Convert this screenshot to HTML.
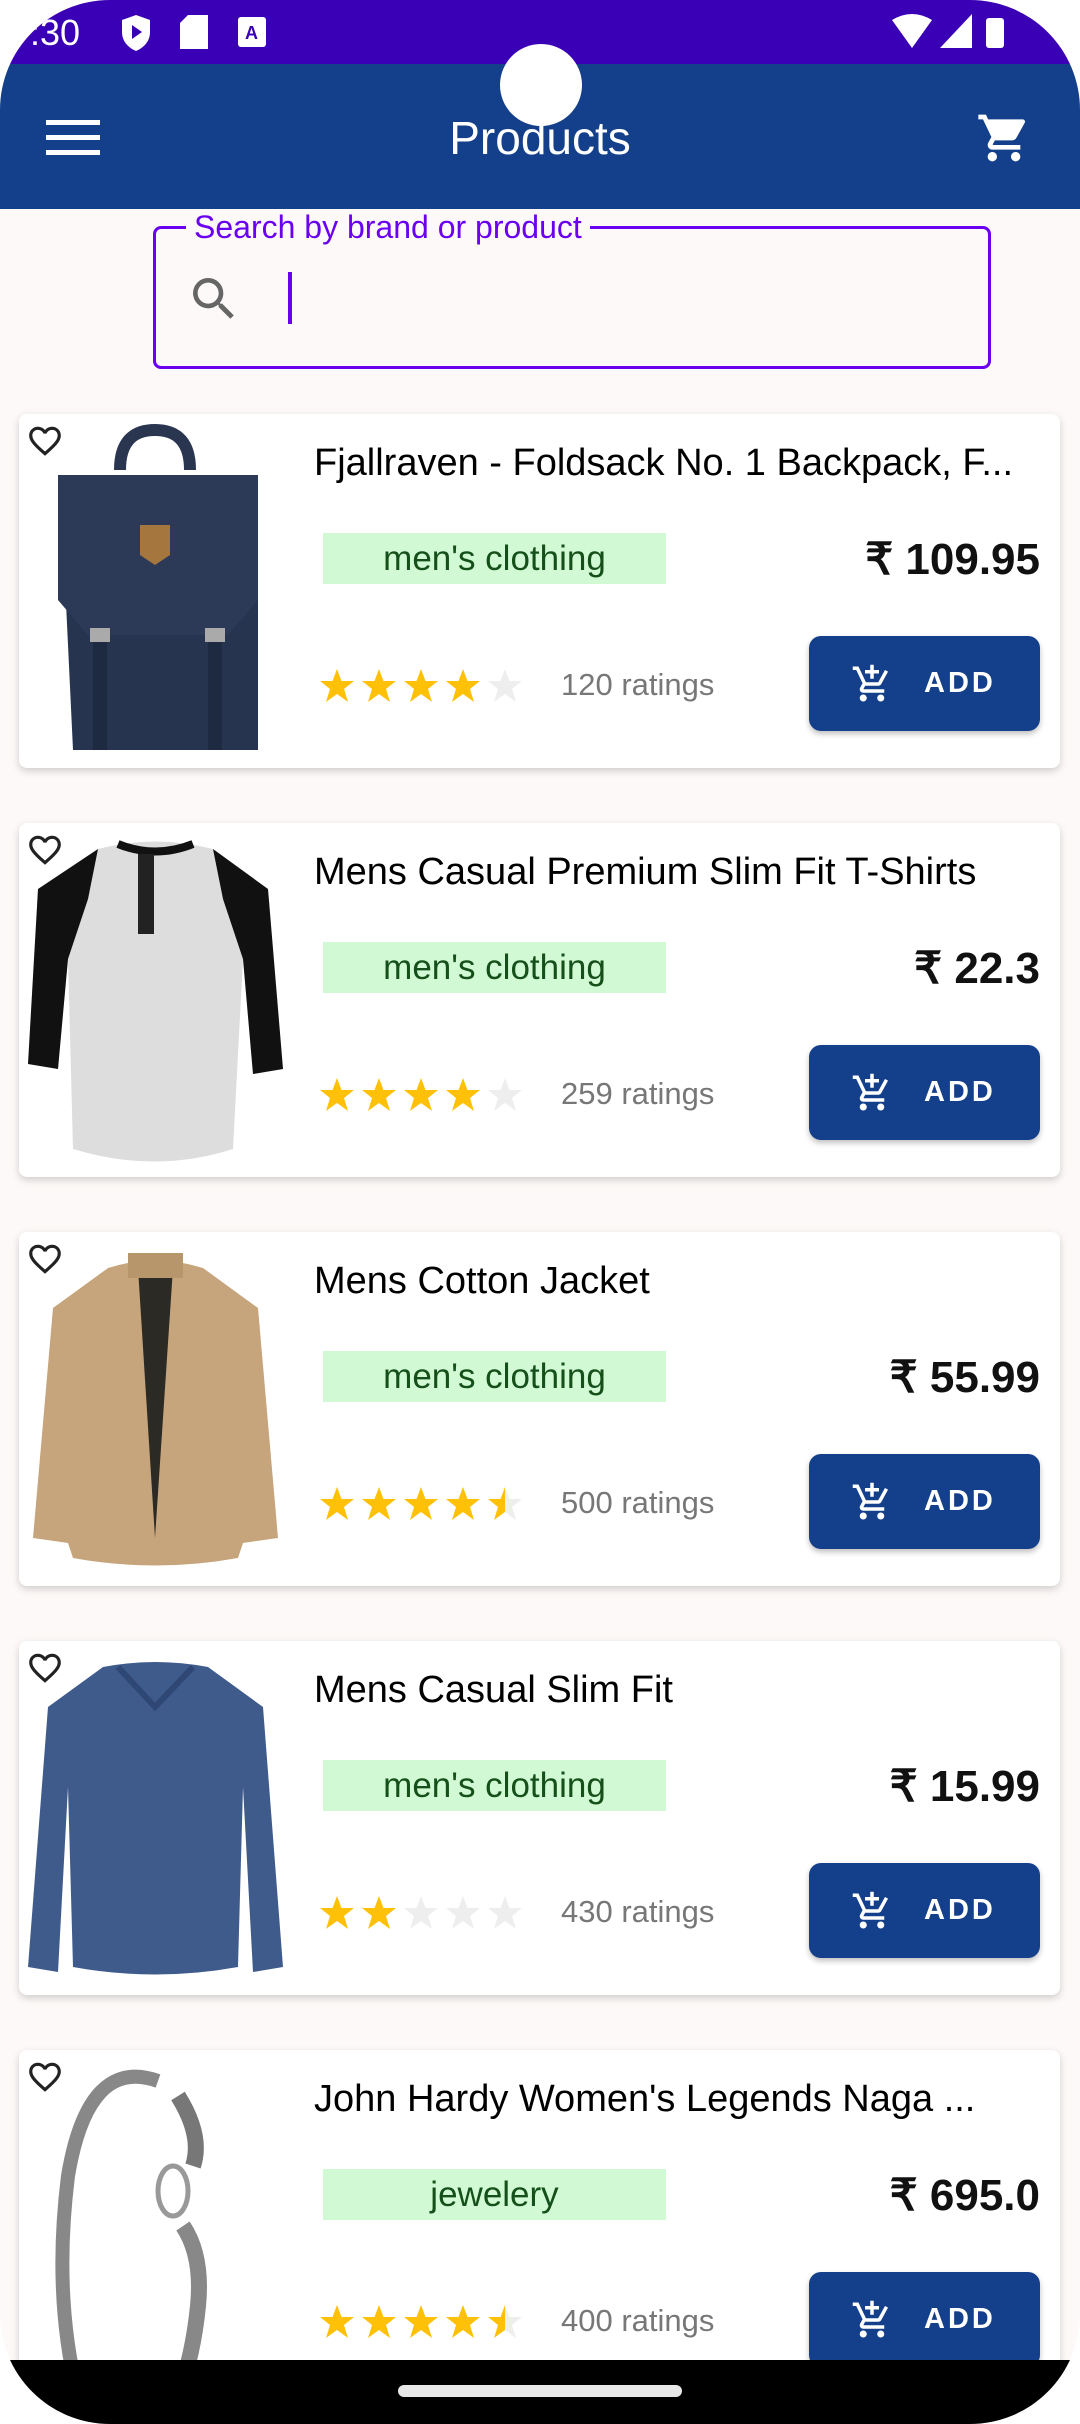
<!DOCTYPE html>
<html><head><meta charset="utf-8">
<style>
*{margin:0;padding:0;box-sizing:border-box}
html,body{width:1080px;height:2424px;overflow:hidden;background:#fff}
body{position:relative;font-family:"Liberation Sans",sans-serif}
.screen{position:absolute;left:0;top:0;width:1080px;height:2424px;background:#fdf9f8;border-radius:110px 110px 110px 110px;overflow:hidden}
.status{position:absolute;left:0;top:0;width:1080px;height:64px;background:#3a00b5}
.appbar{position:absolute;left:0;top:64px;width:1080px;height:145px;background:#143f8a}
.title{position:absolute;left:0;width:1080px;top:111px;text-align:center;color:#fff;font-size:46px}
.search{position:absolute;left:153px;top:226px;width:838px;height:143px;border:3px solid #6a00f0;border-radius:8px}
.slabel{position:absolute;left:186px;top:211px;line-height:32px;padding:0 8px;background:#fdf9f8;color:#6a00f0;font-size:32px}
.card{position:absolute;left:19px;width:1041px;height:354px;background:#fff;border-radius:8px;box-shadow:0 3px 8px rgba(0,0,0,.18)}
.card .img{position:absolute;left:9px;top:6px;width:255px;height:340px}
.heart{position:absolute;left:6px;top:8px}
.ptitle{position:absolute;left:295px;top:28px;width:726px;font-size:38px;color:#000;white-space:nowrap;overflow:hidden}
.tag{position:absolute;left:304px;top:119px;width:343px;height:51px;background:#d1f9d4;color:#15501a;font-size:35px;text-align:center;line-height:51px}
.price{position:absolute;right:20px;top:120px;font-size:44px;font-weight:bold;color:#111}
.stars{position:absolute;left:300px;top:253px}
.ratings{position:absolute;left:542px;top:253px;font-size:31px;color:#777}
.btn{position:absolute;left:790px;top:222px;width:231px;height:95px;background:#143f8a;border-radius:12px;box-shadow:0 3px 6px rgba(0,0,0,.25);color:#fff;font-size:29px;font-weight:bold;letter-spacing:3px}
.btn svg{position:absolute;left:42px;top:27px}
.btn span{position:absolute;left:115px;top:31px}
.nav{position:absolute;left:0;top:2360px;width:1080px;height:64px;background:#000}
.pill{position:absolute;left:398px;top:2385px;width:284px;height:12px;border-radius:6px;background:#e8e8e8}
</style></head><body>
<div class="screen">
<div class="status"></div>
<div style="position:absolute;left:30px;top:12px;color:#fff;font-size:36px">:30</div>
<svg style="position:absolute;left:120px;top:14px" width="32" height="38" viewBox="0 0 32 38"><path d="M16 1 L30 6 V18 C30 28 23 34 16 37 C9 34 2 28 2 18 V6Z" fill="#fff"/><path d="M12 11 L22 18 L12 25Z" fill="#3a00b5"/></svg>
<svg style="position:absolute;left:180px;top:15px" width="28" height="34"><path d="M8 0 H28 V34 H0 V8Z" fill="#fff"/></svg>
<svg style="position:absolute;left:238px;top:17px" width="28" height="30"><rect width="28" height="30" rx="3" fill="#fff"/><text x="7" y="22" font-size="18" font-weight="bold" fill="#3a00b5" font-family="Liberation Sans">A</text></svg>
<svg style="position:absolute;left:890px;top:14px" width="120" height="34"><path d="M2 6 Q22 -6 42 6 L22 34Z" fill="#fff"/><path d="M82 0 V34 H50Z" fill="#fff"/><rect x="96" y="4" width="18" height="30" rx="3" fill="#fff"/></svg>
<div class="appbar"></div>
<div style="position:absolute;left:500px;top:44px;width:82px;height:82px;border-radius:50%;background:#fff"></div>
<svg style="position:absolute;left:46px;top:120px" width="54" height="36"><rect y="0" width="54" height="5" fill="#fff"/><rect y="15" width="54" height="5" fill="#fff"/><rect y="30" width="54" height="5" fill="#fff"/></svg>
<div class="title">Products</div>
<svg style="position:absolute;left:976px;top:110px" width="56" height="56" viewBox="0 0 24 24"><path fill="#fff" d="M7 18c-1.1 0-2 .9-2 2s.9 2 2 2 2-.9 2-2-.9-2-2-2zM1 2v2h2l3.6 7.59-1.35 2.45c-.16.28-.25.61-.25.96 0 1.1.9 2 2 2h12v-2H7.42c-.14 0-.25-.11-.25-.25l.03-.12.9-1.63h7.45c.75 0 1.41-.41 1.750-1.03l3.58-6.49A1 1 0 0 0 20 4H5.21l-.94-2H1zm16 16c-1.1 0-2 .9-2 2s.9 2 2 2 2-.9 2-2-.9-2-2-2z"/></svg>
<div class="search"></div>
<div class="slabel">Search by brand or product</div>
<svg style="position:absolute;left:186px;top:271px" width="56" height="56" viewBox="0 0 24 24"><path fill="#666" d="M15.5 14h-.79l-.28-.27A6.47 6.47 0 0 0 16 9.5 6.5 6.5 0 1 0 9.5 16c1.61 0 3.09-.59 4.23-1.57l.27.28v.79l5 4.99L20.49 19l-4.99-5zm-6 0C7.01 14 5 11.99 5 9.5S7.01 5 9.5 5 14 7.01 14 9.5 11.99 14 9.5 14z"/></svg>
<div style="position:absolute;left:288px;top:272px;width:4px;height:52px;background:#6a00f0"></div>

<div class="card" style="top:414px">
<svg class="img" viewBox="0 0 255 340"><path d="M92 50 Q92 10 127 10 Q162 10 162 50" fill="none" stroke="#2a3550" stroke-width="12"/><path d="M30 55 H230 V330 H45 L35 120Z" fill="#263450"/><path d="M30 55 H230 V180 L200 215 H60 L30 180Z" fill="#2c3a58"/><path d="M112 105 H142 V135 L127 145 L112 135Z" fill="#a5773f"/><rect x="65" y="215" width="14" height="115" fill="#1e2a42"/><rect x="180" y="215" width="14" height="115" fill="#1e2a42"/><rect x="62" y="208" width="20" height="14" fill="#aaa"/><rect x="177" y="208" width="20" height="14" fill="#aaa"/></svg>
<svg class="heart" width="40" height="38" viewBox="0 0 24 24"><path id="hp" fill="#222" d="M16.5 3c-1.74 0-3.41.81-4.5 2.09C10.91 3.81 9.24 3 7.5 3 4.42 3 2 5.42 2 8.5c0 3.78 3.4 6.86 8.55 11.54L12 21.35l1.45-1.32C18.6 15.36 22 12.28 22 8.5 22 5.42 19.58 3 16.5 3zm-4.4 15.55l-.1.1-.1-.1C7.14 14.24 4 11.39 4 8.5 4 6.5 5.5 5 7.5 5c1.54 0 3.04.99 3.57 2.36h1.87C13.46 5.99 14.96 5 16.5 5c2 0 3.5 1.5 3.5 3.5 0 2.89-3.14 5.74-7.9 10.05z"/></svg>
<div class="ptitle">Fjallraven - Foldsack No. 1 Backpack, F...</div>
<div class="tag">men's clothing</div>
<div class="price">₹ 109.95</div>
<svg class="stars" width="210" height="40" viewBox="0 0 210 40"><g id="s"><polygon points="18,2 22.5,14 35,14 25,22 29,35 18,27 7,35 11,22 1,14 13.5,14" fill="#ffc107"/></g><use href="#s" x="42"/><use href="#s" x="84"/><use href="#s" x="126"/><polygon transform="translate(168,0)" points="18,2 22.5,14 35,14 25,22 29,35 18,27 7,35 11,22 1,14 13.5,14" fill="#eee"/></svg>
<div class="ratings">120 ratings</div>
<div class="btn"><svg width="42" height="42" viewBox="0 0 24 24"><path id="cp" fill="#fff" d="M11 9h2V6h3V4h-3V1h-2v3H8v2h3v3zm-4 9c-1.1 0-1.99.9-1.99 2S5.9 22 7 22s2-.9 2-2-.9-2-2-2zm10 0c-1.1 0-1.99.9-1.99 2s.89 2 1.99 2 2-.9 2-2-.9-2-2-2zm-9.83-3.25l.03-.12.9-1.63h7.45c.75 0 1.41-.41 1.75-1.03l3.86-7.01L19.42 4h-.01l-1.1 2-2.76 5H8.53l-.13-.27L6.16 6l-.95-2-.94-2H1v2h2l3.6 7.59-1.35 2.45c-.16.28-.25.61-.25.96 0 1.1.9 2 2 2h12v-2H7.42c-.13 0-.25-.11-.25-.25z"/></svg><span>ADD</span></div>
</div>

<div class="card" style="top:823px">
<svg class="img" viewBox="0 0 255 340"><path d="M70 20 Q127 5 185 20 L240 60 L255 240 L225 245 L215 130 L205 320 Q127 345 45 320 L40 130 L30 240 L0 235 L10 60Z" fill="#ddd"/><path d="M70 20 L10 60 L0 235 L30 240 L40 130 L60 70Z" fill="#111"/><path d="M185 20 L240 60 L255 240 L225 245 L215 130 L195 70Z" fill="#111"/><path d="M90 15 Q127 30 165 15" fill="none" stroke="#111" stroke-width="8"/><rect x="110" y="25" width="16" height="80" fill="#222"/></svg>
<svg class="heart" width="40" height="38" viewBox="0 0 24 24"><use href="#hp"/></svg>
<div class="ptitle">Mens Casual Premium Slim Fit T-Shirts</div>
<div class="tag">men's clothing</div>
<div class="price">₹ 22.3</div>
<svg class="stars" width="210" height="40" viewBox="0 0 210 40"><use href="#s"/><use href="#s" x="42"/><use href="#s" x="84"/><use href="#s" x="126"/><polygon transform="translate(168,0)" points="18,2 22.5,14 35,14 25,22 29,35 18,27 7,35 11,22 1,14 13.5,14" fill="#eee"/></svg>
<div class="ratings">259 ratings</div>
<div class="btn"><svg width="42" height="42" viewBox="0 0 24 24"><use href="#cp"/></svg><span>ADD</span></div>
</div>

<div class="card" style="top:1232px">
<svg class="img" viewBox="0 0 255 340"><path d="M80 30 Q127 15 175 30 L230 70 L250 300 L215 305 L210 320 Q127 335 45 320 L40 305 L5 300 L25 70Z" fill="#c7a57c"/><path d="M110 30 L127 300 L145 30Z" fill="#2b2a25"/><rect x="100" y="15" width="55" height="25" fill="#b8966c"/></svg>
<svg class="heart" width="40" height="38" viewBox="0 0 24 24"><use href="#hp"/></svg>
<div class="ptitle">Mens Cotton Jacket</div>
<div class="tag">men's clothing</div>
<div class="price">₹ 55.99</div>
<svg class="stars" width="210" height="40" viewBox="0 0 210 40"><defs><linearGradient id="h"><stop offset="50%" stop-color="#ffc107"/><stop offset="50%" stop-color="#eee"/></linearGradient></defs><use href="#s"/><use href="#s" x="42"/><use href="#s" x="84"/><use href="#s" x="126"/><polygon transform="translate(168,0)" points="18,2 22.5,14 35,14 25,22 29,35 18,27 7,35 11,22 1,14 13.5,14" fill="url(#h)"/></svg>
<div class="ratings">500 ratings</div>
<div class="btn"><svg width="42" height="42" viewBox="0 0 24 24"><use href="#cp"/></svg><span>ADD</span></div>
</div>

<div class="card" style="top:1641px">
<svg class="img" viewBox="0 0 255 340"><path d="M75 20 Q127 10 180 20 L235 60 L255 320 L225 325 L215 140 L210 320 Q127 335 45 320 L40 140 L30 325 L0 320 L20 60Z" fill="#3f5b8c"/><path d="M90 20 L127 60 L165 20" fill="none" stroke="#2f4774" stroke-width="6"/></svg>
<svg class="heart" width="40" height="38" viewBox="0 0 24 24"><use href="#hp"/></svg>
<div class="ptitle">Mens Casual Slim Fit</div>
<div class="tag">men's clothing</div>
<div class="price">₹ 15.99</div>
<svg class="stars" width="210" height="40" viewBox="0 0 210 40"><use href="#s"/><use href="#s" x="42"/><g fill="#eee"><polygon transform="translate(84,0)" points="18,2 22.5,14 35,14 25,22 29,35 18,27 7,35 11,22 1,14 13.5,14"/><polygon transform="translate(126,0)" points="18,2 22.5,14 35,14 25,22 29,35 18,27 7,35 11,22 1,14 13.5,14"/><polygon transform="translate(168,0)" points="18,2 22.5,14 35,14 25,22 29,35 18,27 7,35 11,22 1,14 13.5,14"/></g></svg>
<div class="ratings">430 ratings</div>
<div class="btn"><svg width="42" height="42" viewBox="0 0 24 24"><use href="#cp"/></svg><span>ADD</span></div>
</div>

<div class="card" style="top:2050px">
<svg class="img" viewBox="0 0 255 340"><path d="M130 25 Q60 0 40 120 Q25 240 50 340" fill="none" stroke="#888" stroke-width="14"/><path d="M150 40 Q175 80 165 110" fill="none" stroke="#777" stroke-width="16"/><ellipse cx="145" cy="135" rx="15" ry="25" fill="none" stroke="#999" stroke-width="5"/><path d="M155 170 Q175 200 170 250 Q165 300 150 340" fill="none" stroke="#888" stroke-width="16"/></svg>
<svg class="heart" width="40" height="38" viewBox="0 0 24 24"><use href="#hp"/></svg>
<div class="ptitle">John Hardy Women's Legends Naga ...</div>
<div class="tag">jewelery</div>
<div class="price">₹ 695.0</div>
<svg class="stars" width="210" height="40" viewBox="0 0 210 40"><use href="#s"/><use href="#s" x="42"/><use href="#s" x="84"/><use href="#s" x="126"/><polygon transform="translate(168,0)" points="18,2 22.5,14 35,14 25,22 29,35 18,27 7,35 11,22 1,14 13.5,14" fill="url(#h)"/></svg>
<div class="ratings">400 ratings</div>
<div class="btn"><svg width="42" height="42" viewBox="0 0 24 24"><use href="#cp"/></svg><span>ADD</span></div>
</div>

<div class="nav"></div>
<div class="pill"></div>
</div>
</body></html>
